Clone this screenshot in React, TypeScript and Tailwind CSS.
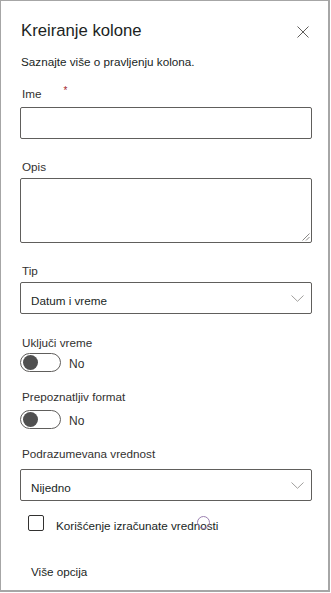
import React from "react";

const font = { fontFamily: '"Liberation Sans", Arial, sans-serif' };

function Toggle() {
  return (
    <div className="flex items-center h-[19px]">
      <div className="w-[41px] h-[19px] rounded-full border border-[#605e5c] flex items-center pl-[2px] box-border">
        <div className="w-[15px] h-[15px] rounded-full bg-[#505050]" />
      </div>
      <span className="ml-[8px] text-[12px] leading-[14px] text-[#323130] relative top-[1px]">No</span>
    </div>
  );
}

function Chevron() {
  return (
    <svg width="13" height="7" viewBox="0 0 13 7" fill="none">
      <path d="M0.5 0.5 L6.5 6.3 L12.5 0.5" stroke="#a19f9d" strokeWidth="1" />
    </svg>
  );
}

const label = "text-[11.7px] leading-[14px] h-[14px] text-[#323130]";

export default function App() {
  return (
    <div className="w-[331px] h-[593px] bg-white" style={font}>
      <div className="w-[330px] h-[592px] border-[#a6a6a6] border-t-[1px] border-l-[1px] border-r-[2px] border-b-[2px] box-border flex flex-col pl-[19px] pr-[16px]">
        <div className="flex items-center justify-between mt-[20px] h-[20px]">
          <h1 className="text-[16.7px] leading-[20px] text-[#201f1e] pl-[1px]">Kreiranje kolone</h1>
          <svg width="12" height="12" viewBox="0 0 12 12" className="mr-[3px] relative top-[1px]">
            <path d="M0.5 0.5 L11.5 11.5 M11.5 0.5 L0.5 11.5" stroke="#605e5c" strokeWidth="1" />
          </svg>
        </div>
        <p className="text-[11.7px] mt-[14px] leading-[14px] h-[14px] pl-[1px] text-[#201f1e]">Saznajte više o pravljenju kolona.</p>

        <div className={`mt-[18px] flex pl-[2px] ${label}`}>
          <span>Ime</span>
          <span className="text-[#a4262c] text-[10px] leading-[10px] ml-[22px] -mt-[1px]">*</span>
        </div>
        <div className="mt-[6px] h-[32px] border border-[#605e5c] rounded-[2px]" />

        <div className={`mt-[21px] pl-[2px] ${label}`}>Opis</div>
        <div className="mt-[4px] h-[65px] border border-[#605e5c] rounded-[2px] relative">
          <svg width="8" height="8" viewBox="0 0 8 8" className="absolute right-[1px] bottom-[1px]">
            <path d="M7.5 0.5 L0.5 7.5 M7.5 4 L4 7.5" stroke="#8a8886" strokeWidth="1" />
          </svg>
        </div>

        <div className={`mt-[21px] pl-[2px] ${label}`}>Tip</div>
        <div className="mt-[4px] h-[32px] border border-[#605e5c] rounded-[2px] flex items-center justify-between pl-[10px] pr-[7px]">
          <span className="text-[11.7px] leading-[14px] text-[#201f1e] relative top-[3px]">Datum i vreme</span>
          <Chevron />
        </div>

        <div className={`mt-[22px] pl-[2px] ${label}`}>Uključi vreme</div>
        <div className="mt-[3px] pl-[0px]"><Toggle /></div>

        <div className={`mt-[18px] pl-[2px] ${label}`}>Prepoznatljiv format</div>
        <div className="mt-[6px] pl-[0px]"><Toggle /></div>

        <div className={`mt-[18px] pl-[2px] ${label}`}>Podrazumevana vrednost</div>
        <div className="mt-[8px] h-[32px] border border-[#605e5c] rounded-[2px] flex items-center justify-between pl-[10px] pr-[7px]">
          <span className="text-[11.7px] leading-[14px] text-[#201f1e] relative top-[3px]">Nijedno</span>
          <Chevron />
        </div>

        <div className="mt-[14px] flex items-center pl-[8px] h-[16px]">
          <div className="w-[16px] h-[16px] border border-[#323130] rounded-[2px] box-border" />
          <span className="ml-[12px] text-[11.7px] leading-[14px] text-[#201f1e] relative top-[3px]">
            Korišćenje izračunate vrednosti
            <span className="absolute left-[141px] top-[-3px] w-[13px] h-[13px] rounded-full border border-[#9b7fb0]" />
          </span>
        </div>

        <div className="mt-[34px] pl-[11px] text-[11.7px] leading-[14px] text-[#201f1e]">Više opcija</div>
      </div>
    </div>
  );
}
